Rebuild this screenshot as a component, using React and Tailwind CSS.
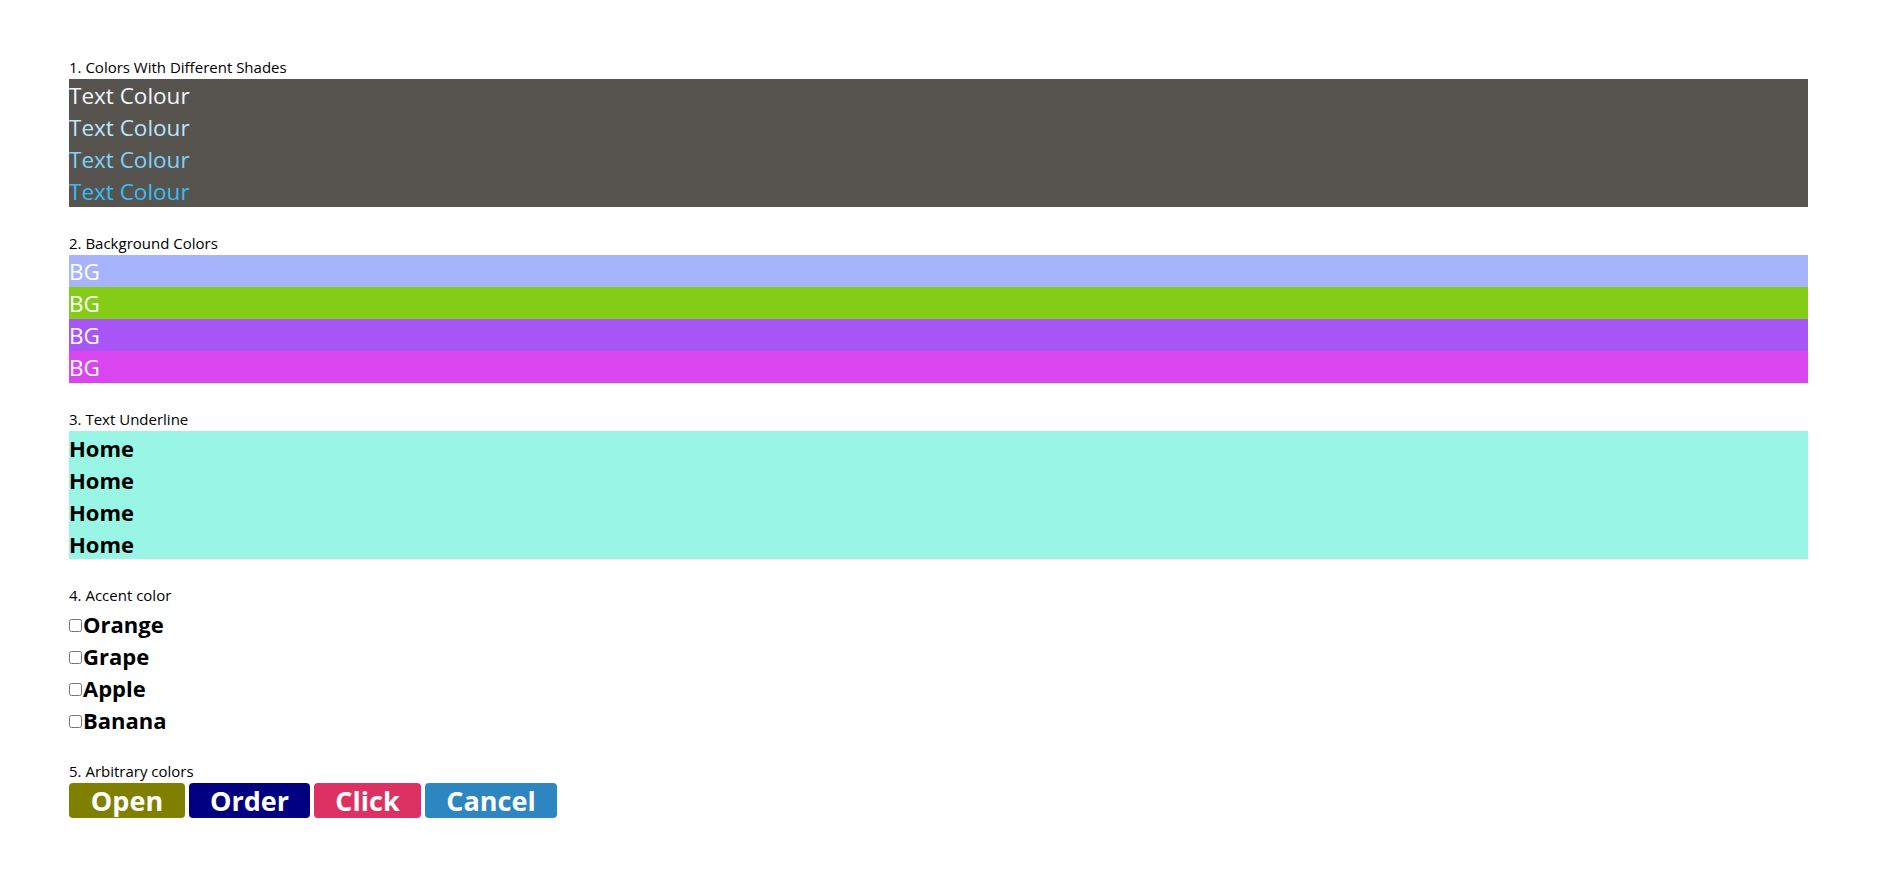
import React from "react";

function Label({ children }) {
  return <p className="pt-px text-[15px] leading-[23px] text-black">{children}</p>;
}

export default function App() {
  const fruits = ["Orange", "Grape", "Apple", "Banana"];
  return (
    <div className="min-h-[885px] bg-white pt-[55px] pl-[69px] pr-[72px] font-['Open_Sans',_'Noto_Sans',_sans-serif]">
      <section>
        <Label>1. Colors With Different Shades</Label>
        <div className="bg-[#57534e] text-[22.5px] leading-[30px]">
          <p className="pt-[2px] text-[#f0f9ff]">Text Colour</p>
          <p className="pt-[2px] text-[#bae6fd]">Text Colour</p>
          <p className="pt-[2px] text-[#7dd3fc]">Text Colour</p>
          <p className="pt-[2px] text-[#38bdf8]">Text Colour</p>
        </div>
      </section>

      <section className="mt-6">
        <Label>2. Background Colors</Label>
        <div className="text-[22.5px] leading-[30px] text-white">
          <p className="bg-[#a5b4fc] pt-[2px]">BG</p>
          <p className="bg-[#84cc16] pt-[2px]">BG</p>
          <p className="bg-[#a855f7] pt-[2px]">BG</p>
          <p className="bg-[#d946ef] pt-[2px]">BG</p>
        </div>
      </section>

      <section className="mt-6">
        <Label>3. Text Underline</Label>
        <div className="bg-[#99f6e4] text-[22px] font-bold leading-[30px] text-black">
          <p className="pt-[2px]">Home</p>
          <p className="pt-[2px]">Home</p>
          <p className="pt-[2px]">Home</p>
          <p className="pt-[2px]">Home</p>
        </div>
      </section>

      <section className="mt-6">
        <Label>4. Accent color</Label>
        <div className="text-[22px] font-bold leading-[30px] text-black">
          {fruits.map((f) => (
            <div key={f} className="flex items-center pt-[2px]">
              <input type="checkbox" className="m-0 mt-[3px] h-[13px] w-[13px] mr-px" />
              <span>{f}</span>
            </div>
          ))}
        </div>
      </section>

      <section className="mt-6">
        <Label>5. Arbitrary colors</Label>
        <div className="flex gap-1 text-[27px] font-bold text-white">
          <button className="flex h-[35px] w-[116px] items-center justify-center rounded bg-[#808000] leading-none">Open</button>
          <button className="flex h-[35px] w-[121px] items-center justify-center rounded bg-[#000080] leading-none">Order</button>
          <button className="flex h-[35px] w-[107px] items-center justify-center rounded bg-[#de3163] leading-none">Click</button>
          <button className="flex h-[35px] w-[132px] items-center justify-center rounded bg-[#2e86c1] leading-none">Cancel</button>
        </div>
      </section>
    </div>
  );
}
